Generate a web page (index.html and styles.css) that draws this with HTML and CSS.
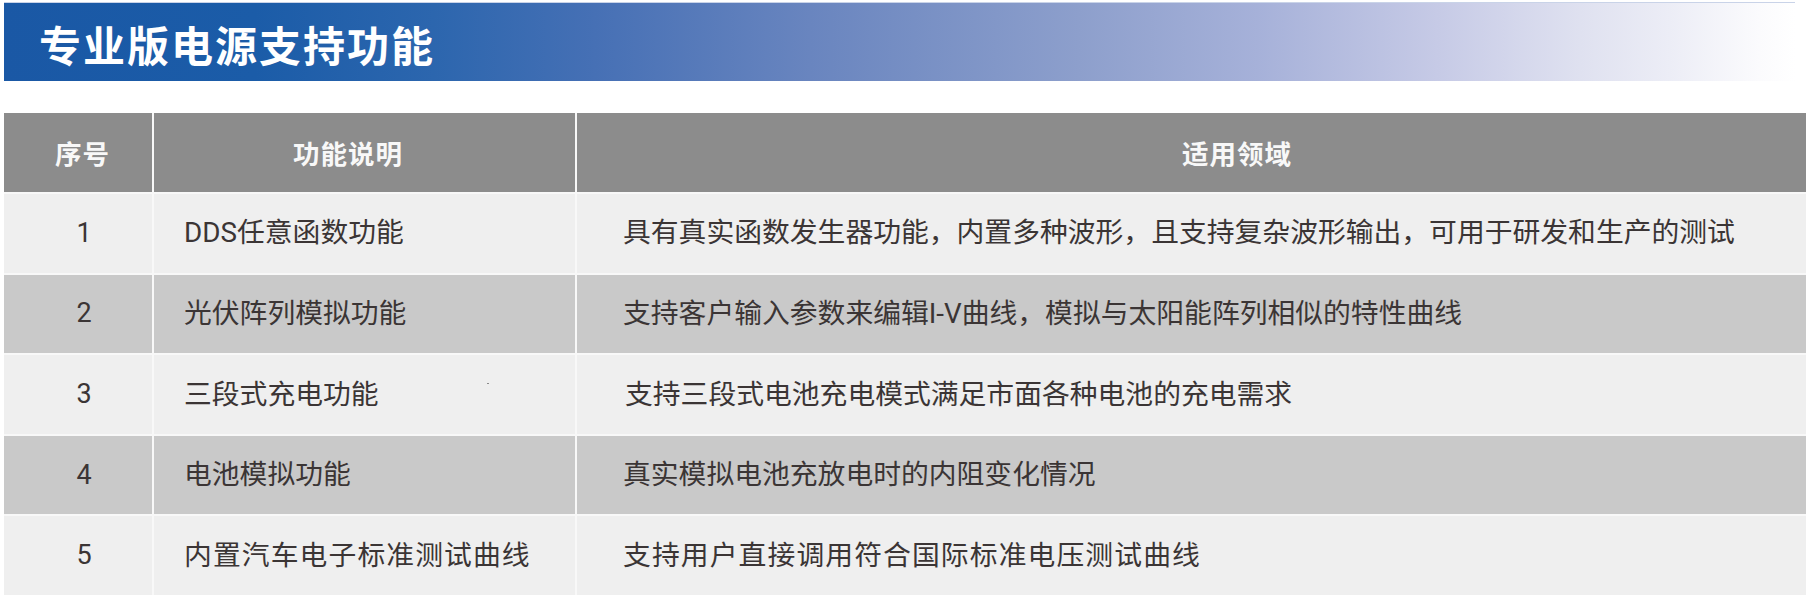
FILE: index.html
```html
<!DOCTYPE html>
<html lang="zh-CN">
<head>
<meta charset="utf-8">
<title>专业版电源支持功能</title>
<link rel="stylesheet" href="styles.css">
</head>
<body>
<div class="page">
  <div class="banner"><h1 class="banner-title">专业版电源支持功能</h1></div>
  <div class="table">
    <div class="cell head c1">序号</div>
    <div class="cell head c2">功能说明</div>
    <div class="cell head c3">适用领域</div>

    <div class="cell odd c1 num">1</div>
    <div class="cell odd c2">DDS任意函数功能</div>
    <div class="cell odd c3">具有真实函数发生器功能，内置多种波形，且支持复杂波形输出，可用于研发和生产的测试</div>

    <div class="cell even c1 num">2</div>
    <div class="cell even c2">光伏阵列模拟功能</div>
    <div class="cell even c3">支持客户输入参数来编辑I-V曲线，模拟与太阳能阵列相似的特性曲线</div>

    <div class="cell odd c1 num">3</div>
    <div class="cell odd c2 speck-host">三段式充电功能<span class="speck"></span></div>
    <div class="cell odd c3 shift">支持三段式电池充电模式满足市面各种电池的充电需求</div>

    <div class="cell even c1 num">4</div>
    <div class="cell even c2">电池模拟功能</div>
    <div class="cell even c3">真实模拟电池充放电时的内阻变化情况</div>

    <div class="cell odd c1 num">5</div>
    <div class="cell odd c2 spaced">内置汽车电子标准测试曲线</div>
    <div class="cell odd c3 spaced">支持用户直接调用符合国际标准电压测试曲线</div>
  </div>
</div>
</body>
</html>
```
FILE: styles.css
```css
* { box-sizing: border-box; }
html, body {
  margin: 0;
  padding: 0;
  background: #ffffff;
}
body {
  font-family: Roboto, "Noto Sans CJK SC", "Noto Sans", sans-serif;
  color: #3b3535;
}
.page {
  width: 1810px;
  height: 595px;
  overflow: hidden;
  padding: 2px 0 0 4px;
}
.banner {
  width: 1791px;
  height: 79px;
  display: flex;
  align-items: center;
  padding: 3px 0 0 35px;
  border-top: 1px solid #c9d3e8;
  background: linear-gradient(to right,
    #1a58a5 0%, #1b5ca8 14%, #2c66ae 24%, #4670b5 33%,
    #6985bf 45%, #8d9fcc 60%, #a6b1d9 70%, #c6cae6 80%,
    #dfe1f0 88%, #ecedf6 93%, #fbfbfd 98%, #ffffff 100%);
}
.banner-title {
  margin: 0;
  font-family: "Noto Sans CJK SC", sans-serif;
  font-size: 42px;
  font-weight: 700;
  letter-spacing: 2px;
  color: #ffffff;
  line-height: 1;
}
.table {
  margin-top: 32px;
  width: 1802px;
  display: grid;
  grid-template-columns: 148px 421px 1fr;
  grid-template-rows: 79px repeat(5, 78.6px);
  gap: 2px;
  background: #f8f8f8;
}
.cell {
  display: flex;
  align-items: center;
  font-size: 27.8px;
  line-height: 1;
  white-space: nowrap;
}
.head {
  background: #8c8c8c;
  color: #f8f8f8;
  font-family: "Noto Sans CJK SC", sans-serif;
  font-weight: 700;
  font-size: 26.5px;
  letter-spacing: 1px;
  padding-top: 2px;
}
.odd { background: #efefef; }
.even { background: #c9c9c9; }
.head.c1 { padding-left: 51px; }
.head.c2 { padding-left: 139px; }
.head.c3 { padding-left: 605px; }
.c1.num {
  justify-content: center;
  padding-left: 12px;
  font-family: Roboto, sans-serif;
  font-size: 27px;
}
.c2 { padding-left: 30px; }
.c3 { padding-left: 46px; }
.c3.shift { padding-left: 48px; }
.spaced { letter-spacing: 1.1px; }
.speck-host { position: relative; }
.speck {
  position: absolute;
  left: 333px;
  top: 28px;
  width: 2px;
  height: 1px;
  background: #8a8a8a;
}
```
